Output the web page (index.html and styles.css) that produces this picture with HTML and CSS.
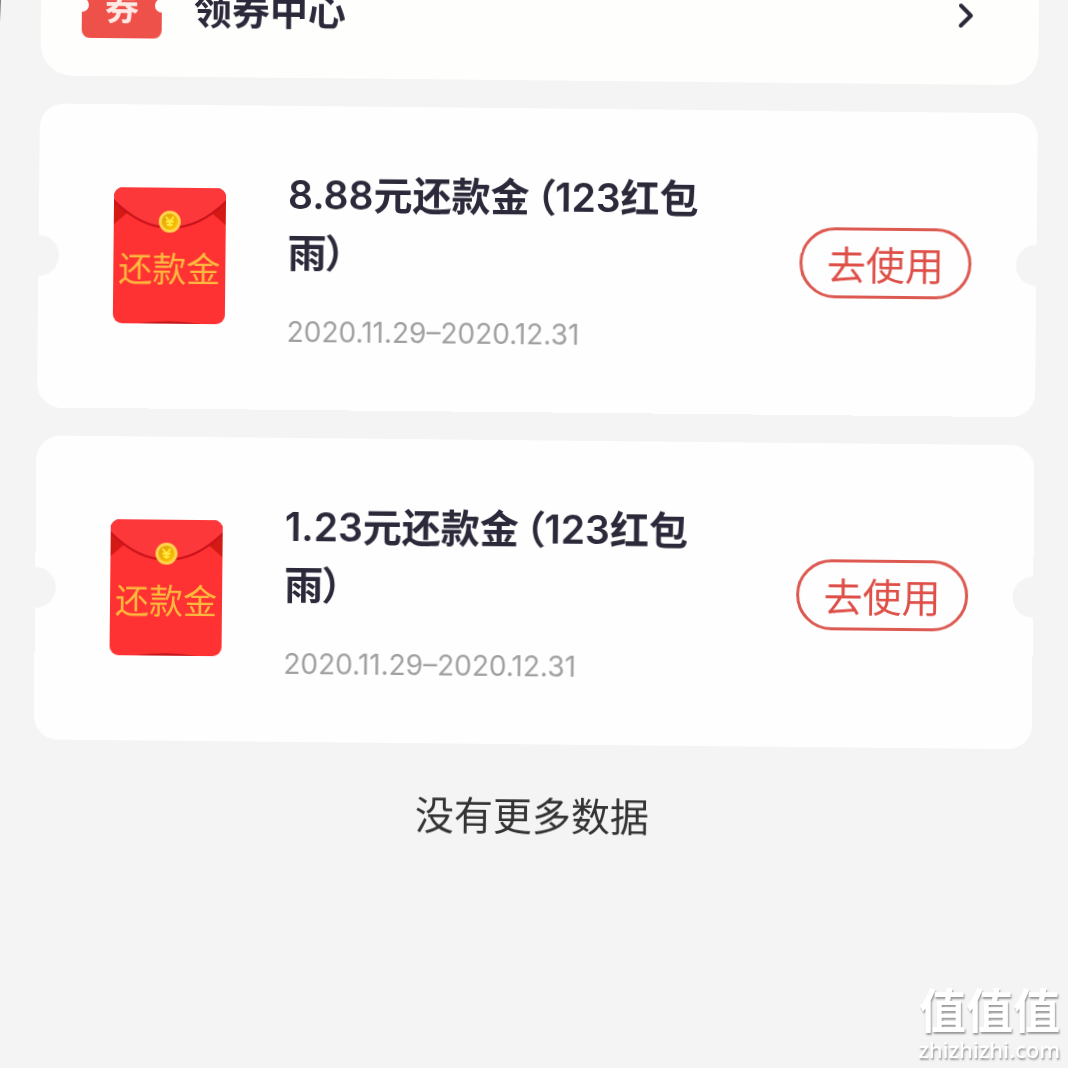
FILE: index.html
```html
<!DOCTYPE html>
<html lang="zh-CN">
<head>
<meta charset="utf-8">
<meta name="viewport" content="width=device-width, initial-scale=1">
<title>领券中心</title>
<link rel="stylesheet" href="styles.css">
</head>
<body>
<svg class="symbols" aria-hidden="true">
  <defs>
    <linearGradient id="coin-fill" x1="0" y1="0" x2="1" y2="1">
      <stop offset="0" stop-color="#dfa00c"/>
      <stop offset="1" stop-color="#ffc400"/>
    </linearGradient>
    <clipPath id="envelope-clip"><rect width="112" height="136" rx="9"/></clipPath>
  </defs>
  <symbol id="envelope" viewBox="0 0 112 136">
    <g clip-path="url(#envelope-clip)">
      <rect width="112" height="136" fill="#fe3232"/>
      <path d="M0 14L14 25L0 37ZM112 14L98 25L112 37Z" fill="#d41a14"/>
      <path d="M0 0H112V15C76 50 36 50 0 15Z" fill="#c9131a"/>
      <path d="M0 0H112V12C76 48 36 48 0 12Z" fill="#fd383b"/>
      <path d="M26 136Q56 131 88 136Z" fill="#c4161c"/>
    </g>
    <circle cx="56" cy="34" r="11" fill="#ffd54c"/>
    <circle cx="56" cy="34" r="8" fill="url(#coin-fill)"/>
    <path d="M52 29L56 34L60 29M56 34V39M52 34H60M53 37H59" fill="none" stroke="#ffe83f" stroke-width="2"/>
  </symbol>
</svg>
<div class="screen">
  <main class="coupons">
    <a class="center-link" href="#center">
      <svg class="ticket" viewBox="0 0 80 62" aria-hidden="true">
        <path d="M8 0H72A8 8 0 0 1 80 8V22A7 7 0 0 0 80 36V54A8 8 0 0 1 72 62H8A8 8 0 0 1 0 54V36A7 7 0 0 0 0 22V8A8 8 0 0 1 8 0Z" fill="#ee5149"/>
        <text class="ticket-text" x="40" y="44">券</text>
      </svg>
      <span class="center-title">领券中心</span>
      <svg class="chevron" viewBox="0 0 16 26" aria-hidden="true"><path d="M3 3L13 13L3 23"/></svg>
    </a>

    <article class="coupon">
      <div class="envelope">
        <svg class="envelope-art" aria-hidden="true"><use href="#envelope"/></svg>
        <span class="envelope-text">还款金</span>
      </div>
      <div class="details">
        <h2 class="title">8.88元还款金<span class="source">（123红包雨）</span></h2>
        <p class="dates">2020.11.29–2020.12.31</p>
      </div>
      <button class="use" type="button">去使用</button>
    </article>

    <article class="coupon">
      <div class="envelope">
        <svg class="envelope-art" aria-hidden="true"><use href="#envelope"/></svg>
        <span class="envelope-text">还款金</span>
      </div>
      <div class="details">
        <h2 class="title">1.23元还款金<span class="source">（123红包雨）</span></h2>
        <p class="dates">2020.11.29–2020.12.31</p>
      </div>
      <button class="use" type="button">去使用</button>
    </article>

    <p class="end">没有更多数据</p>
  </main>
</div>
<div class="watermark">
  <span class="watermark-name">值值值</span>
  <span class="watermark-site">zhizhizhi.com</span>
</div>
</body>
</html>
```
FILE: styles.css
```css
* {
  box-sizing: border-box;
}

body {
  margin: 0;
  min-height: 100vh;
  overflow: hidden;
  background: #f4f4f4;
  color: #2c2a3a;
  font-family: "Noto Sans CJK SC", sans-serif;
}

/* Dark sliver beside the leaning screen, at the top left corner. */
body::before {
  content: "";
  position: fixed;
  top: 0;
  left: 0;
  width: 1px;
  height: 22px;
  background: linear-gradient(#777, #f4f4f4);
}

.symbols {
  position: absolute;
  width: 0;
  height: 0;
}

/* The whole screen leans slightly clockwise. */
.screen {
  display: flow-root;
  transform: rotate(0.57deg);
  transform-origin: 0 0;
}

/* The list is scrolled so that the first card is cut by the top edge. */
.coupons {
  display: flex;
  flex-direction: column;
  gap: 28px;
  margin-top: -62px;
  padding: 0 29px 0 41px;
}

.center-link {
  display: flex;
  align-items: center;
  height: 137px;
  padding: 0 65px 2px 41px;
  border-radius: 32px;
  background: #fefefd;
  color: inherit;
  text-decoration: none;
}

.ticket {
  width: 80px;
  height: 62px;
}

.ticket-text {
  fill: #ffe9e4;
  font-size: 34px;
  font-weight: 700;
  text-anchor: middle;
}

.center-title {
  flex: 1;
  margin-left: 32px;
  font-size: 38px;
  font-weight: 700;
  line-height: 56px;
}

.chevron {
  width: 16px;
  height: 26px;
  fill: none;
  stroke: #2c2a3a;
  stroke-width: 4;
  stroke-linecap: round;
  stroke-linejoin: round;
}

.coupon {
  display: flex;
  align-items: center;
  height: 304px;
  padding: 0 65px 2px 75px;
  border-radius: 24px;
  background:
    radial-gradient(circle at 0 50%, #f4f4f4 20px, transparent 21px),
    radial-gradient(circle at 100% 50%, #f4f4f4 20px, transparent 21px),
    #fefefe;
}

.envelope {
  display: grid;
  flex: none;
  width: 112px;
  height: 136px;
}

.envelope-art,
.envelope-text {
  grid-area: 1 / 1;
}

.envelope-art {
  width: 112px;
  height: 136px;
}

.envelope-text {
  z-index: 1;
  padding-top: 56px;
  color: #fdb83e;
  font-size: 34px;
  line-height: 48px;
  text-align: center;
}

.details {
  flex: 1;
  margin: 4px 80px 0 62px;
  font-family: Inter, "Noto Sans CJK SC", sans-serif;
}

.title {
  margin: 0;
  font-size: 39px;
  font-weight: 600;
  line-height: 58px;
  font-feature-settings: "palt";
}

.source {
  margin-left: 6px;
}

.dates {
  margin: 30px 0 0;
  color: #a0a0a0;
  font-size: 28px;
  line-height: 40px;
}

.use {
  flex: none;
  width: 172px;
  height: 71px;
  padding: 0;
  border: 3px solid #dc5a52;
  border-radius: 36px;
  background: transparent;
  color: #de4f48;
  font: inherit;
  font-size: 39px;
  line-height: 58px;
}

.end {
  margin: 12px 0 0;
  color: #333;
  font-size: 39px;
  line-height: 58px;
  text-align: center;
}

.watermark {
  position: fixed;
  right: 8px;
  bottom: 6px;
  display: flex;
  flex-direction: column;
  align-items: flex-end;
  color: #fff;
  text-shadow: 1px 2px 2px #999;
}

.watermark-name {
  font-size: 47px;
  font-weight: 700;
  line-height: 56px;
}

.watermark-site {
  font-family: "Noto Sans", sans-serif;
  font-size: 22px;
  font-weight: 500;
  line-height: 26px;
}
```
